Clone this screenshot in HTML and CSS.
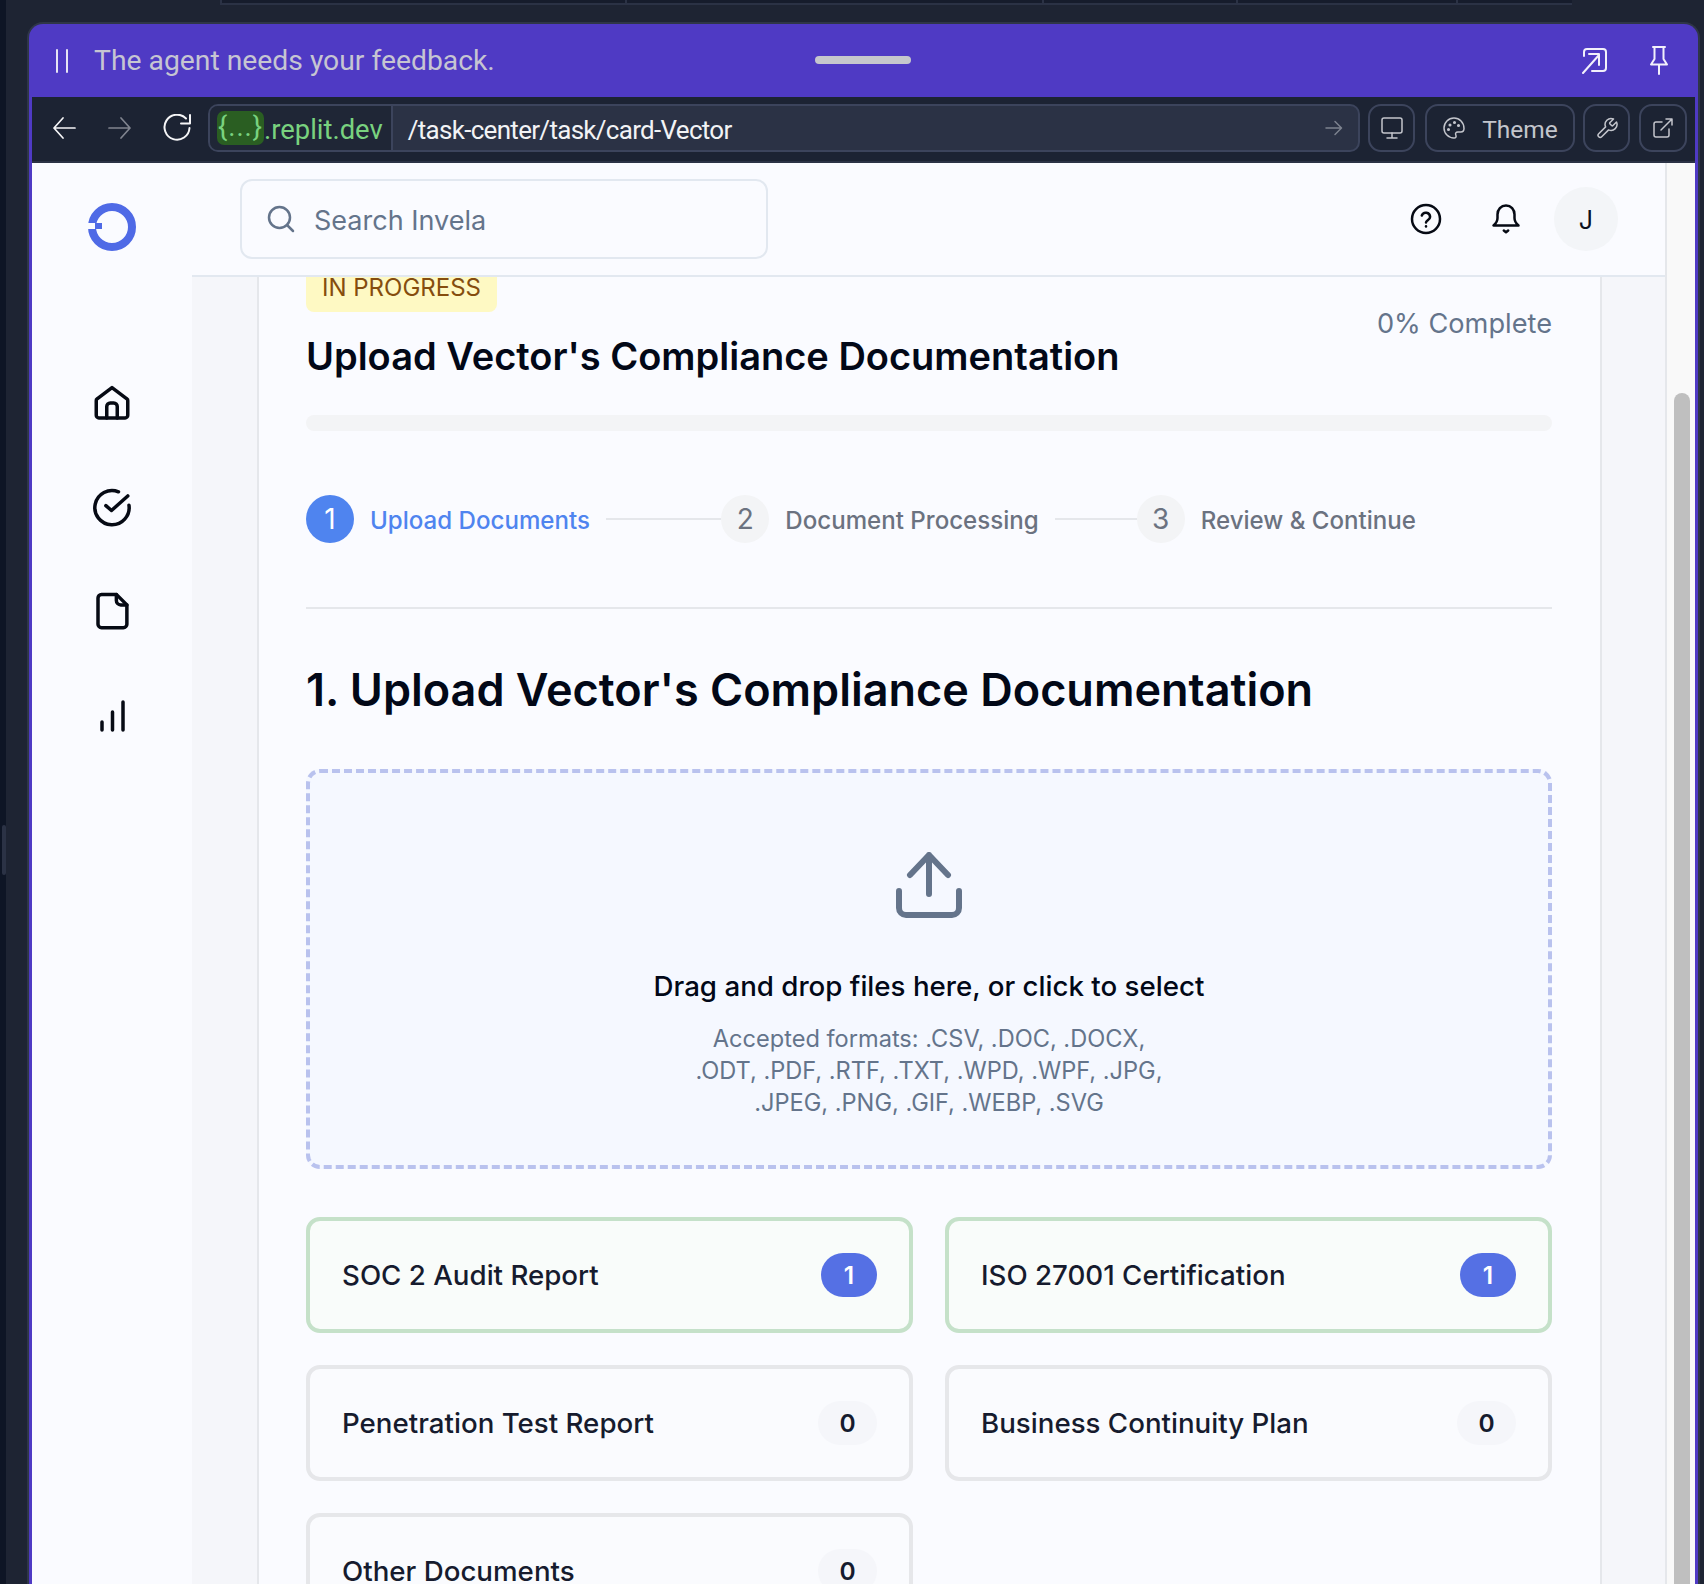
FILE: index.html
```html
<!DOCTYPE html>
<html>
<head>
  <title>Invela - Upload Documents</title>
  <link rel="stylesheet" href="styles.css">
</head>
<body>
  <div class="tab-strip">
    <span class="tab-cell tab-cell-a"></span>
    <span class="tab-cell tab-cell-b"></span>
    <span class="tab-cell tab-cell-c"></span>
    <span class="tab-cell tab-cell-d"></span>
    <span class="tab-cell tab-cell-e"></span>
  </div>
  <div class="shell">
    <div class="rail"><span class="rail-handle"></span></div>
    <div class="window">
      <div class="agent-bar">
        <div class="agent-left">
          <svg class="pause-icon" viewBox="0 0 14 24"><path d="M2 1v22M12 1v22"/></svg>
          <span class="agent-text">The agent needs your feedback.</span>
        </div>
        <span class="agent-handle"></span>
        <div class="agent-right">
          <svg class="agent-icon" viewBox="0 0 26 28"><path d="M3 10V6a3 3 0 0 1 3-3h16a3 3 0 0 1 3 3v16a3 3 0 0 1-3 3H11"/><path d="M2 27L18 9M8 8h10v11"/></svg>
          <svg class="pin-icon" viewBox="0 0 20 30"><path d="M4 2h12M5.500 2v12L2 19.500h16L14.500 14V2M10 19.500V29"/></svg>
        </div>
      </div>

      <div class="toolbar">
        <svg class="nav-icon" viewBox="0 0 24 24"><path d="M23 12H2M11 2L2 12l9 10"/></svg>
        <svg class="nav-icon nav-icon-dim" viewBox="0 0 24 24"><path d="M1 12h21M13 2l9 10-9 10"/></svg>
        <svg class="reload-icon" viewBox="0 0 30 28"><path d="M24 4.500A12.500 12.500 0 1 0 27.500 14"/><path d="M19 9.500h9V1"/></svg>
        <div class="url-bar">
          <div class="url-host"><span class="url-mask">{...}</span>.replit.dev</div>
          <div class="url-path">/task-center/task/card-Vector</div>
          <svg class="url-go" viewBox="0 0 18 18"><path d="M1 9h15M10 2.500L16.500 9 10 15.500"/></svg>
        </div>
        <button class="tool-btn">
          <svg class="tool-icon" viewBox="0 0 24 24"><rect x="2" y="2" width="20" height="15" rx="2"/><path d="M12 17v5M7 22h10"/></svg>
        </button>
        <button class="tool-btn tool-btn-theme">
          <svg class="tool-icon" viewBox="0 0 24 24"><path d="M12 2a10 10 0 0 0 0 20c2 0 2.500-1.500 1.800-3-.8-1.800.2-3 2-3h3c1.800 0 3.200-1.300 3.200-3.500C22 6.500 17.500 2 12 2z"/><circle cx="8" cy="9" r=".8"/><circle cx="12.500" cy="6.500" r=".8"/><circle cx="16.500" cy="9.500" r=".8"/><circle cx="6.500" cy="13.500" r=".8"/></svg>
          <span class="theme-text">Theme</span>
        </button>
        <button class="tool-btn">
          <svg class="tool-icon" viewBox="0 0 24 24"><path d="M15 6.500a1 1 0 0 0 0 1.400l1.600 1.600a1 1 0 0 0 1.400 0l3.500-3.500a6 6 0 0 1-7.900 7.900l-6.900 6.900a2.100 2.100 0 0 1-3-3l6.900-6.900a6 6 0 0 1 7.900-7.900z"/></svg>
        </button>
        <button class="tool-btn tool-btn-last">
          <svg class="tool-icon" viewBox="0 0 24 24"><path d="M18 13v6a2 2 0 0 1-2 2H5a2 2 0 0 1-2-2V8a2 2 0 0 1 2-2h6M15 3h6v6M10 14L21 3"/></svg>
        </button>
      </div>

      <div class="app">
        <aside class="sidebar">
          <svg class="logo" viewBox="0 0 48 48">
            <circle class="logo-ring" cx="24" cy="24" r="20"/>
            <rect class="logo-notch" x="0" y="20" width="8" height="6"/>
            <rect class="logo-tab" x="7" y="20" width="7" height="6"/>
          </svg>
          <nav class="side-nav">
            <svg class="side-icon" viewBox="0 0 24 24"><path d="M12 3.200L20.500 9.600a1 1 0 0 1 .5 1V19a1.500 1.500 0 0 1-1.500 1.500h-15A1.500 1.500 0 0 1 3 19v-8.400a1 1 0 0 1 .5-1z"/><path d="M9 20.500V14a2 2 0 0 1 2-2h2a2 2 0 0 1 2 2v6.500"/></svg>
            <svg class="side-icon" viewBox="0 0 24 24"><path d="M21.700 11a9.800 9.800 0 1 1-6-7.700"/><path d="M8.500 11.200l3.200 2.800 9.300-8.300"/></svg>
            <svg class="side-icon" viewBox="0 0 24 24"><path d="M6 2.500h8.500L20.500 8.500V19.500a2 2 0 0 1-2 2H6a2 2 0 0 1-2-2v-15a2 2 0 0 1 2-2z"/><path d="M14.500 2.500v3.500a2.500 2.500 0 0 0 2.500 2.500h3.500"/></svg>
            <svg class="side-icon" viewBox="0 0 42 42"><path class="chart-line" d="M11 28v8M21.500 18v18M32 8v28"/></svg>
          </nav>
        </aside>

        <div class="center">
          <header class="topbar">
            <div class="search">
              <svg class="search-icon" viewBox="0 0 28 28"><circle cx="12.500" cy="12.500" r="10.500"/><path d="M20 20l6 6"/></svg>
              <span class="search-text">Search Invela</span>
            </div>
            <div class="top-actions">
              <svg class="top-icon" viewBox="0 0 32 32"><circle cx="16" cy="16" r="14"/><path d="M11.800 12.500a4.300 4.300 0 0 1 8.300 1.400c0 2.800-4.100 3.600-4.100 5.500"/><path d="M16 23.300v.2"/></svg>
              <svg class="top-icon bell-icon" viewBox="0 0 32 32"><path d="M16 2.500c-5 0-8.500 3.800-8.500 9v3.500c0 3-1 5-4 7.500h25c-3-2.500-4-4.500-4-7.500v-3.500c0-5.200-3.500-9-8.500-9z"/><path d="M13.800 27.500l2.200 1.800 2.200-1.800"/></svg>
              <div class="avatar">J</div>
            </div>
          </header>

          <main class="main">
            <section class="card">
              <div class="card-head">
                <div>
                  <span class="status-badge">IN PROGRESS</span>
                  <h2 class="task-title">Upload Vector's Compliance Documentation</h2>
                </div>
                <span class="percent">0% Complete</span>
              </div>
              <div class="progress"></div>

              <div class="steps">
                <div class="step step-active">
                  <span class="step-num">1</span>
                  <span class="step-label">Upload Documents</span>
                  <span class="step-line"></span>
                </div>
                <div class="step">
                  <span class="step-num">2</span>
                  <span class="step-label">Document Processing</span>
                  <span class="step-line"></span>
                </div>
                <div class="step">
                  <span class="step-num">3</span>
                  <span class="step-label">Review &amp; Continue</span>
                </div>
              </div>

              <h1 class="section-title">1. Upload Vector's Compliance Documentation</h1>

              <div class="dropzone">
                <svg class="upload-icon" viewBox="0 0 66 66"><path d="M33 42V3M14 23L33 3l19 20"/><path d="M3 39v17a7 7 0 0 0 7 7h46a7 7 0 0 0 7-7V39"/></svg>
                <p class="drop-title">Drag and drop files here, or click to select</p>
                <p class="drop-formats">Accepted formats: .CSV, .DOC, .DOCX,<br>.ODT, .PDF, .RTF, .TXT, .WPD, .WPF, .JPG,<br>.JPEG, .PNG, .GIF, .WEBP, .SVG</p>
              </div>

              <div class="doc-grid">
                <div class="doc doc-done"><span>SOC 2 Audit Report</span><span class="count count-on">1</span></div>
                <div class="doc doc-done"><span>ISO 27001 Certification</span><span class="count count-on">1</span></div>
                <div class="doc"><span>Penetration Test Report</span><span class="count">0</span></div>
                <div class="doc"><span>Business Continuity Plan</span><span class="count">0</span></div>
                <div class="doc"><span>Other Documents</span><span class="count">0</span></div>
              </div>
            </section>
          </main>
        </div>

        <div class="scroll-rail"><span class="scroll-thumb"></span></div>
      </div>
    </div>
  </div>
</body>
</html>
```

FILE: styles.css
```css
* {
  box-sizing: border-box;
}

html,
body {
  margin: 0;
  height: 100%;
}

body {
  width: 1704px;
  height: 1584px;
  overflow: hidden;
  display: flex;
  flex-direction: column;
  background-color: #1e2433;
  font-family: 'Inter', sans-serif;
}

svg {
  display: block;
  flex: none;
  fill: none;
  stroke-linecap: round;
  stroke-linejoin: round;
}

h1,
h2,
p {
  margin: 0;
}

/* top sliver of the editor behind the window */
.tab-strip {
  height: 5px;
  padding-left: 220px;
  display: flex;
  flex: none;
}

.tab-cell {
  height: 5px;
  background-color: #161c2c;
  border-left: 2px solid #2b3245;
  border-bottom: 2px solid #2b3245;
}

.tab-cell-a { width: 405px; }
.tab-cell-b { width: 417px; }
.tab-cell-c { width: 194px; }
.tab-cell-d { width: 220px; }
.tab-cell-e { width: 116px; }

.shell {
  flex: 1;
  display: flex;
  min-height: 0;
}

.rail {
  width: 6px;
  margin-top: -5px;
  background-color: #0e1525;
  display: flex;
  align-items: center;
  padding-top: 116px;
}

.rail-handle {
  width: 4px;
  height: 50px;
  margin-left: 2px;
  border-radius: 2px;
  background-color: #2b3245;
}

.window {
  width: 1673px;
  margin: 17px 0 0 21px;
  padding: 0 3px;
  display: flex;
  flex-direction: column;
  background-color: #4f3ac4;
  border: 2px solid #2f3648;
  border-bottom: none;
  border-radius: 16px 16px 0 0;
}

/* agent banner */
.agent-bar {
  height: 73px;
  flex: none;
  display: flex;
  align-items: center;
  justify-content: space-between;
  position: relative;
  padding: 0 26px 0 23px;
}

.agent-left {
  display: flex;
  align-items: center;
  gap: 25px;
}

.pause-icon {
  width: 14px;
  height: 24px;
  stroke: #e6e4f4;
  stroke-width: 2;
}

.agent-text {
  font-family: 'Roboto', sans-serif;
  font-size: 28.300px;
  color: #c6c5d2;
}

.agent-handle {
  position: absolute;
  left: 783px;
  top: 32px;
  width: 96px;
  height: 8px;
  border-radius: 4px;
  background-color: #c6c7cd;
}

.agent-right {
  display: flex;
  align-items: center;
  gap: 42px;
}

.agent-icon {
  width: 26px;
  height: 28px;
  margin-top: -2px;
  stroke: #f2f0fb;
  stroke-width: 2;
}

.pin-icon {
  width: 20px;
  height: 30px;
  margin-top: -2px;
  stroke: #f2f0fb;
  stroke-width: 2;
}

/* browser toolbar */
.toolbar {
  height: 66px;
  flex: none;
  display: flex;
  align-items: center;
  padding: 0 8px 2px 20px;
  background-color: #1c2333;
  border-bottom: 2px solid #2b3245;
}

.nav-icon {
  width: 24px;
  height: 24px;
  margin-right: 32px;
  stroke: #f5f5f7;
  stroke-width: 1.700;
}

.nav-icon-dim {
  stroke: #80848f;
  margin-right: 30px;
}

.reload-icon {
  width: 30px;
  height: 28px;
  margin-right: 16px;
  stroke: #f5f5f7;
  stroke-width: 2;
}

.url-bar {
  flex: 1;
  height: 48px;
  display: flex;
  align-items: center;
  background-color: #2b3245;
  border: 2px solid #3c445c;
  border-radius: 10px;
  font-family: 'Roboto', sans-serif;
}

.url-host {
  height: 100%;
  padding: 4px 8px 0 7px;
  display: flex;
  align-items: center;
  font-size: 27.400px;
  color: #79d27f;
  background-color: #1f2636;
  border-right: 2px solid #3c445c;
  border-radius: 8px 0 0 8px;
}

.url-mask {
  width: 47px;
  height: 34px;
  line-height: 32px;
  text-align: center;
  letter-spacing: 1px;
  margin-top: -4px;
  border-radius: 7px;
  background-color: #2a5e22;
}

.url-path {
  flex: 1;
  padding: 4px 0 0 15px;
  font-size: 26px;
  letter-spacing: -0.700px;
  color: #f2f3f5;
}

.url-go {
  width: 18px;
  height: 18px;
  margin-right: 15px;
  stroke: #7d828f;
  stroke-width: 1.500;
}

.tool-btn {
  height: 48px;
  width: 47px;
  margin-left: 8px;
  padding: 0;
  display: flex;
  align-items: center;
  justify-content: center;
  gap: 16px;
  background-color: #1c2333;
  border: 2px solid #3c445c;
  border-radius: 13px;
  font-family: 'Roboto', sans-serif;
  font-size: 24.500px;
  color: #c3c5cc;
}

.tool-btn-theme {
  width: 150px;
  margin-left: 10px;
}

.tool-btn-last {
  width: 48px;
  margin-left: 9px;
}

.theme-text {
  padding-top: 2px;
}

.tool-icon {
  width: 24px;
  height: 24px;
  stroke: #c3c5cc;
  stroke-width: 1.500;
}

/* the app in the preview */
.app {
  flex: 1;
  min-height: 0;
  display: flex;
  background-color: #fafbff;
}

.sidebar {
  width: 160px;
  flex: none;
  display: flex;
  flex-direction: column;
  align-items: center;
  padding-top: 40px;
}

.logo {
  width: 48px;
  height: 48px;
}

.logo-ring {
  stroke: #4f6ae6;
  stroke-width: 8;
}

.logo-notch {
  fill: #fafbff;
}

.logo-tab {
  fill: #4f6ae6;
}

.side-nav {
  margin-top: 131px;
  display: flex;
  flex-direction: column;
  gap: 62px;
}

.side-icon {
  width: 42px;
  height: 42px;
  stroke: #060a14;
  stroke-width: 2;
}

.chart-line {
  stroke-width: 3.500;
}

.center {
  flex: 1;
  min-width: 0;
  display: flex;
  flex-direction: column;
  border-right: 2px solid #e5e7eb;
}

.topbar {
  height: 114px;
  flex: none;
  display: flex;
  align-items: center;
  justify-content: space-between;
  padding: 0 47px 0 48px;
  border-bottom: 2px solid #e2e8f0;
}

.search {
  width: 528px;
  height: 80px;
  display: flex;
  align-items: center;
  gap: 19px;
  padding-left: 25px;
  border: 2px solid #e2e8f0;
  border-radius: 12px;
  font-size: 27px;
  color: #64748b;
}

.search-text {
  padding-top: 2px;
}

.search-icon {
  width: 28px;
  height: 28px;
  stroke: #64748b;
  stroke-width: 2.500;
}

.top-actions {
  display: flex;
  align-items: center;
}

.top-icon {
  width: 32px;
  height: 32px;
  stroke: #060a14;
  stroke-width: 2.500;
}

.bell-icon {
  margin-left: 48px;
}

.avatar {
  width: 64px;
  height: 64px;
  margin-left: 32px;
  padding-top: 2px;
  display: flex;
  align-items: center;
  justify-content: center;
  border-radius: 50%;
  background-color: #f3f5f8;
  font-size: 25px;
  color: #0b1020;
}

.main {
  flex: 1;
  min-height: 0;
  overflow: hidden;
  padding: 0 63px 0 65px;
  background-color: #f5f6fa;
}

.card {
  margin-top: -64px;
  padding: 49px 48px 49px 47px;
  background-color: #fafbff;
  border: 2px solid #e5e7eb;
}

.card-head {
  display: flex;
  justify-content: space-between;
}

.status-badge {
  display: block;
  width: 191px;
  height: 48px;
  line-height: 48px;
  text-align: center;
  border-radius: 8px;
  background-color: #fef9c3;
  font-size: 24px;
  color: #854d0e;
}

.task-title {
  margin-top: 16px;
  font-size: 38px;
  line-height: 56px;
  font-weight: 600;
  color: #020817;
}

.percent {
  margin-top: 42px;
  font-size: 27.200px;
  line-height: 36px;
  color: #64748b;
}

.progress {
  height: 16px;
  margin-top: 31px;
  border-radius: 8px;
  background-color: #f3f4f6;
}

.steps {
  margin-top: 64px;
  padding-bottom: 64px;
  display: grid;
  grid-template-columns: repeat(3, 1fr);
  border-bottom: 2px solid #e5e7eb;
}

.step {
  display: flex;
  align-items: center;
  gap: 16px;
}

.step-num {
  width: 48px;
  height: 48px;
  flex: none;
  display: flex;
  align-items: center;
  justify-content: center;
  border-radius: 50%;
  background-color: #f3f4f6;
  font-size: 28px;
  color: #6b7280;
}

.step-label {
  padding-top: 2px;
  font-size: 24.100px;
  font-weight: 500;
  white-space: nowrap;
  color: #6b7280;
}

.step-line {
  flex: 1;
  height: 2px;
  background-color: #e5e7eb;
}

.step-active .step-num {
  background-color: #4f84ef;
  color: #fff;
}

.step-active .step-label {
  color: #4f84ef;
}

.section-title {
  margin-top: 49px;
  font-size: 45px;
  line-height: 64px;
  font-weight: 600;
  color: #020817;
}

.dropzone {
  margin-top: 47px;
  height: 400px;
  padding-top: 79px;
  display: flex;
  flex-direction: column;
  align-items: center;
  text-align: center;
  background-color: #f5f8ff;
  border: 4px dashed #b9c2ee;
  border-radius: 14px;
}

.upload-icon {
  width: 66px;
  height: 66px;
  stroke: #64748b;
  stroke-width: 6;
}

.drop-title {
  margin-top: 48px;
  font-size: 27.700px;
  line-height: 40px;
  font-weight: 500;
  color: #020817;
}

.drop-formats {
  margin-top: 17px;
  font-size: 23.600px;
  line-height: 32px;
  color: #64748b;
}

.doc-grid {
  margin-top: 48px;
  display: grid;
  grid-template-columns: 1fr 1fr;
  gap: 32px;
}

.doc {
  height: 116px;
  padding: 0 32px;
  display: flex;
  align-items: center;
  justify-content: space-between;
  background-color: #fafbfe;
  border: 4px solid #e6e7ea;
  border-radius: 14px;
  font-size: 27.700px;
  font-weight: 450;
  color: #161b2e;
}

.doc-done {
  background-color: #f9fcfa;
  border-color: #c5e1c9;
}

.count {
  width: 59px;
  height: 44px;
  display: flex;
  align-items: center;
  justify-content: center;
  border-radius: 22px;
  background-color: #f5f6fa;
  font-size: 24.500px;
  font-weight: 600;
}

.count-on {
  width: 56px;
  background-color: #5570e4;
  color: #fff;
}

.scroll-rail {
  width: 28px;
  flex: none;
  padding: 230px 5px 0 7px;
  background-color: #f9f9f9;
}

.scroll-thumb {
  display: block;
  height: 100%;
  border-radius: 8px 8px 0 0;
  background-color: #bfbfbf;
}
```
